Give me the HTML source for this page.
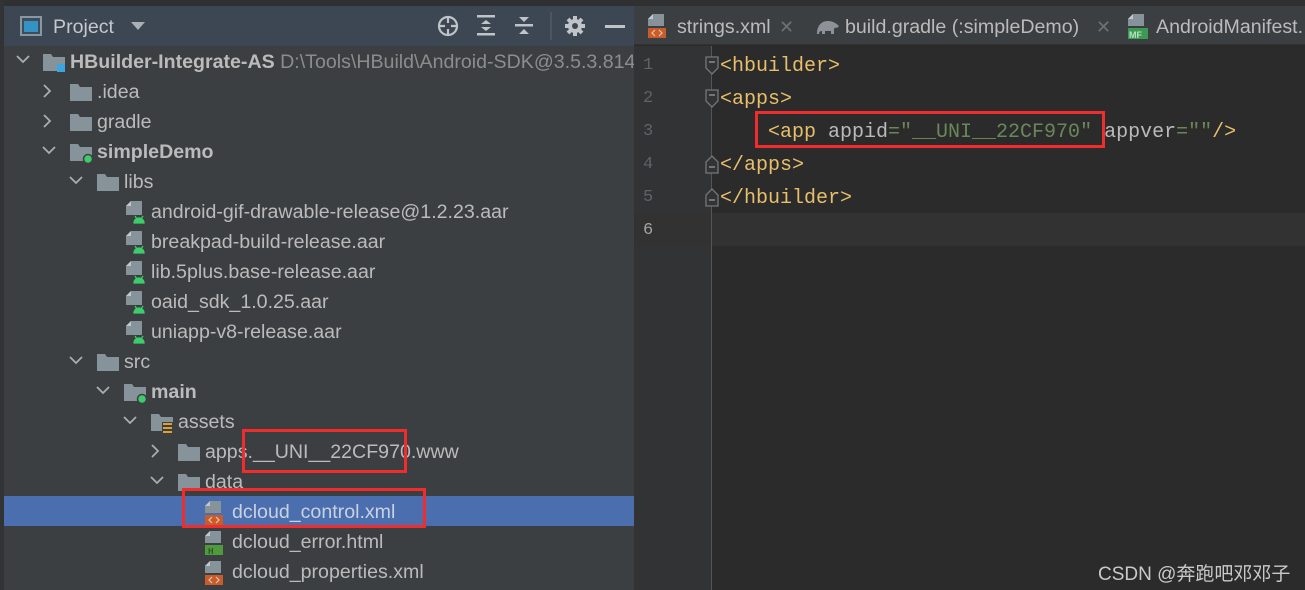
<!DOCTYPE html>
<html><head><meta charset="utf-8"><style>
*{margin:0;padding:0;box-sizing:border-box}
body{width:1305px;height:590px;overflow:hidden;background:#2b2b2b;position:relative;font-family:"Liberation Sans",sans-serif}
.a{position:absolute}
.t{position:absolute;color:#bbbbbb;font-size:19.6px;line-height:30px;white-space:nowrap;margin-top:1px}
.b{font-weight:bold}
.code{position:absolute;font-family:"Liberation Mono",monospace;font-size:20px;line-height:33px;white-space:pre;color:#e8bf6a}
.ln{position:absolute;font-family:"Liberation Mono",monospace;font-size:17px;color:#606366;left:643px}
.red{position:absolute;border:3px solid #f02c2c}
</style></head><body>
<div class="a" style="left:0;top:0;width:634px;height:590px;background:#3c3f41"></div>
<div class="a" style="left:0;top:0;width:634px;height:6px;background:#2e3032"></div>
<div class="a" style="left:0;top:0;width:4px;height:590px;background:#313335"></div>
<div class="a" style="left:4px;top:6px;width:630px;height:40px;background:#3d4653"></div>
<svg class="a" style="left:20px;top:16px" width="24" height="22"><rect x="1" y="1" width="20" height="18" fill="#3c4e5e" stroke="#8a96a0" stroke-width="2"/><rect x="4" y="5" width="14" height="11" fill="#3592c4"/></svg>
<div class="t" style="left:53px;top:11px;color:#c5c8cc">Project</div>
<svg class="a" style="left:131px;top:22px" width="14" height="9"><path d="M0 0H14L7 8Z" fill="#aab0b5"/></svg>
<svg class="a" style="left:436px;top:14px" width="24" height="24" fill="none" stroke="#c0c4c8" stroke-width="2.2"><circle cx="12" cy="12" r="9"/><path d="M12 3v6M12 15v6M3 12h6M15 12h6"/></svg>
<svg class="a" style="left:476px;top:15px" width="22" height="22" fill="#c0c4c8"><rect x="1" y="0" width="18" height="2.5"/><rect x="1" y="18" width="18" height="2.5"/><path d="M5 9l5-4 5 4zM5 12l5 4 5-4z"/></svg>
<svg class="a" style="left:514px;top:15px" width="22" height="22" fill="#c0c4c8"><rect x="1" y="9" width="18" height="2.5"/><path d="M5 2l5 5 5-5zM5 19l5-5 5 5z"/></svg>
<div class="a" style="left:550px;top:12px;width:2px;height:28px;background:#4c5560"></div>
<svg class="a" style="left:564px;top:15px" width="22" height="22"><circle cx="11" cy="11" r="7" fill="#c0c4c8"/><g stroke="#c0c4c8" stroke-width="4"><path d="M11 1v20M1 11h20M4 4l14 14M18 4L4 18"/></g><circle cx="11" cy="11" r="3" fill="#3d4653"/></svg>
<div class="a" style="left:605px;top:25px;width:20px;height:3px;background:#c0c4c8"></div>

<div class="a" style="left:4px;top:496px;width:630px;height:30px;background:#4b6eaf"></div>

<svg width="0" height="0" style="position:absolute"><defs>
<g id="dn"><path d="M1 2l6 6 6-6" fill="none" stroke="#a9aeb2" stroke-width="1.8"/></g>
<g id="rt"><path d="M2 1l6 6-6 6" fill="none" stroke="#a9aeb2" stroke-width="1.8"/></g>
<g id="fd"><path d="M0 2h8l2 3h12v14H0z" fill="#87939a"/></g>
<g id="md"><path d="M0 2h8l2 3h12v14H0z" fill="#87939a"/><circle cx="18" cy="17" r="4.5" fill="#3dcc6b" stroke="#3c3f41" stroke-width="1.5"/></g>
<g id="fl"><path d="M5 0h11v14H0V5z" fill="#87939a"/><path d="M0 5h5V0z" fill="#c2c7cb"/></g>
</defs></svg>

<svg class="a" style="left:16px;top:54px" width="14" height="14"><use href="#dn"/></svg>
<svg class="a" style="left:43px;top:52px" width="24" height="22"><path d="M0 2h8l2 3h12v14H0z" fill="#87939a"/><rect x="14" y="12" width="8" height="8" fill="#3aa5e0"/></svg>
<div class="t b" style="left:70px;top:46px">HBuilder-Integrate-AS <span style="font-weight:normal;color:#8c8c8c">D:\Tools\HBuild\Android-SDK@3.5.3.814</span></div>

<svg class="a" style="left:42px;top:84px" width="14" height="14"><use href="#rt"/></svg>
<svg class="a" style="left:70px;top:82px" width="24" height="20"><use href="#fd"/></svg>
<div class="t" style="left:97px;top:76px">.idea</div>
<svg class="a" style="left:42px;top:114px" width="14" height="14"><use href="#rt"/></svg>
<svg class="a" style="left:70px;top:112px" width="24" height="20"><use href="#fd"/></svg>
<div class="t" style="left:97px;top:106px">gradle</div>
<svg class="a" style="left:42px;top:145px" width="14" height="14"><use href="#dn"/></svg>
<svg class="a" style="left:70px;top:142px" width="24" height="24"><use href="#md"/></svg>
<div class="t b" style="left:97px;top:136px">simpleDemo</div>
<svg class="a" style="left:69px;top:175px" width="14" height="14"><use href="#dn"/></svg>
<svg class="a" style="left:97px;top:172px" width="24" height="20"><use href="#fd"/></svg>
<div class="t" style="left:124px;top:166px">libs</div>

<svg class="a" style="left:126px;top:201px" width="22" height="24"><use href="#fl"/><path d="M8 22a5 5 0 0 1 10 0z M9 15l2 3 M17 15l-2 3" fill="#3dcc6b" stroke="#3dcc6b" stroke-width="1.3"/></svg>
<div class="t" style="left:151px;top:196px">android-gif-drawable-release@1.2.23.aar</div>
<svg class="a" style="left:126px;top:231px" width="22" height="24"><use href="#fl"/><path d="M8 22a5 5 0 0 1 10 0z M9 15l2 3 M17 15l-2 3" fill="#3dcc6b" stroke="#3dcc6b" stroke-width="1.3"/></svg>
<div class="t" style="left:151px;top:226px">breakpad-build-release.aar</div>
<svg class="a" style="left:126px;top:261px" width="22" height="24"><use href="#fl"/><path d="M8 22a5 5 0 0 1 10 0z M9 15l2 3 M17 15l-2 3" fill="#3dcc6b" stroke="#3dcc6b" stroke-width="1.3"/></svg>
<div class="t" style="left:151px;top:256px">lib.5plus.base-release.aar</div>
<svg class="a" style="left:126px;top:291px" width="22" height="24"><use href="#fl"/><path d="M8 22a5 5 0 0 1 10 0z M9 15l2 3 M17 15l-2 3" fill="#3dcc6b" stroke="#3dcc6b" stroke-width="1.3"/></svg>
<div class="t" style="left:151px;top:286px">oaid_sdk_1.0.25.aar</div>
<svg class="a" style="left:126px;top:321px" width="22" height="24"><use href="#fl"/><path d="M8 22a5 5 0 0 1 10 0z M9 15l2 3 M17 15l-2 3" fill="#3dcc6b" stroke="#3dcc6b" stroke-width="1.3"/></svg>
<div class="t" style="left:151px;top:316px">uniapp-v8-release.aar</div>

<svg class="a" style="left:69px;top:355px" width="14" height="14"><use href="#dn"/></svg>
<svg class="a" style="left:97px;top:352px" width="24" height="20"><use href="#fd"/></svg>
<div class="t" style="left:124px;top:346px">src</div>
<svg class="a" style="left:96px;top:385px" width="14" height="14"><use href="#dn"/></svg>
<svg class="a" style="left:124px;top:382px" width="24" height="24"><use href="#md"/></svg>
<div class="t b" style="left:151px;top:376px">main</div>
<svg class="a" style="left:123px;top:415px" width="14" height="14"><use href="#dn"/></svg>
<svg class="a" style="left:151px;top:412px" width="24" height="22"><path d="M0 2h8l2 3h12v14H0z" fill="#87939a"/><rect x="11" y="10" width="11" height="12" fill="#3c3f41"/><g fill="#e0a030"><rect x="12" y="11" width="9" height="2"/><rect x="12" y="15" width="9" height="2"/><rect x="12" y="19" width="9" height="2"/></g></svg>
<div class="t" style="left:178px;top:406px">assets</div>
<svg class="a" style="left:150px;top:444px" width="14" height="14"><use href="#rt"/></svg>
<svg class="a" style="left:178px;top:442px" width="24" height="20"><use href="#fd"/></svg>
<div class="t" style="left:205px;top:436px">apps.__UNI__22CF970.www</div>
<svg class="a" style="left:150px;top:475px" width="14" height="14"><use href="#dn"/></svg>
<svg class="a" style="left:178px;top:472px" width="24" height="20"><use href="#fd"/></svg>
<div class="t" style="left:205px;top:466px">data</div>

<svg class="a" style="left:205px;top:501px" width="22" height="24"><path d="M5 0h11v12H0V5z" fill="#87939a"/><path d="M0 5h5V0z" fill="#c2c7cb"/><rect x="0" y="14" width="18" height="10" fill="#c75d2c"/><path d="M7 16l-3 3 3 3M11 16l3 3-3 3" fill="none" stroke="#f3c2a8" stroke-width="1.2"/></svg>
<div class="t" style="left:232px;top:496px;color:#c8d2e0">dcloud_control.xml</div>
<svg class="a" style="left:205px;top:531px" width="22" height="24"><path d="M5 0h11v12H0V5z" fill="#87939a"/><path d="M0 5h5V0z" fill="#c2c7cb"/><rect x="0" y="14" width="18" height="10" fill="#4e9a3c"/><text x="3" y="23" font-size="9" font-family="Liberation Mono" fill="#1e3a15">H</text></svg>
<div class="t" style="left:232px;top:526px">dcloud_error.html</div>
<svg class="a" style="left:205px;top:561px" width="22" height="24"><path d="M5 0h11v12H0V5z" fill="#87939a"/><path d="M0 5h5V0z" fill="#c2c7cb"/><rect x="0" y="14" width="18" height="10" fill="#c75d2c"/><path d="M7 16l-3 3 3 3M11 16l3 3-3 3" fill="none" stroke="#f3c2a8" stroke-width="1.2"/></svg>
<div class="t" style="left:232px;top:556px">dcloud_properties.xml</div>

<div class="a" style="left:634px;top:0;width:671px;height:6px;background:#2e3032"></div>
<div class="a" style="left:634px;top:6px;width:671px;height:39px;background:#3c3f41;border-bottom:1px solid #323232"></div>
<svg class="a" style="left:648px;top:14px" width="22" height="24"><path d="M5 0h11v12H0V5z" fill="#87939a"/><path d="M0 5h5V0z" fill="#c2c7cb"/><rect x="0" y="14" width="18" height="10" fill="#c75d2c"/><path d="M7 16l-3 3 3 3M11 16l3 3-3 3" fill="none" stroke="#f3c2a8" stroke-width="1.2"/></svg>
<div class="t" style="left:677px;top:11px">strings.xml</div>
<div class="t" style="left:779px;top:11px;color:#6d7174;font-size:18px">✕</div>
<svg class="a" style="left:815px;top:16px" width="26" height="20"><path d="M2 18c0-8 4-13 11-13 5 0 9 3 11 5l-2 2c-2-1-3 0-3 2v4h-3v-3h-6v3H7v-3c-2 0-3 1-3 3z" fill="#8c9297"/></svg>
<div class="t" style="left:845px;top:11px">build.gradle (:simpleDemo)</div>
<div class="t" style="left:1096px;top:11px;color:#6d7174;font-size:18px">✕</div>
<svg class="a" style="left:1128px;top:14px" width="22" height="26"><path d="M5 0h11v12H0V5z" fill="#87939a"/><path d="M0 5h5V0z" fill="#c2c7cb"/><rect x="0" y="14" width="20" height="11" fill="#3d9a55"/><text x="1" y="24" font-size="9" font-family="Liberation Sans" font-weight="bold" fill="#b7e3c2">MF</text></svg>
<div class="t" style="left:1156px;top:11px">AndroidManifest.</div>

<div class="a" style="left:634px;top:46px;width:78px;height:544px;background:#313335"></div>
<div class="a" style="left:634px;top:213px;width:671px;height:33px;background:#323232"></div>
<div class="a" style="left:711px;top:46px;width:1px;height:544px;background:#555555"></div>
<div class="ln" style="top:56px">1</div>
<div class="ln" style="top:89px">2</div>
<div class="ln" style="top:122px">3</div>
<div class="ln" style="top:155px">4</div>
<div class="ln" style="top:188px">5</div>
<div class="ln" style="top:221px;color:#a4a3a3">6</div>
<svg class="a" style="left:705px;top:56px" width="14" height="22"><path d="M1 1h12v11l-6 6-6-6z" fill="#313335" stroke="#777" stroke-width="1.3"/><path d="M4 6h6" stroke="#999" stroke-width="1.3"/></svg>
<svg class="a" style="left:705px;top:89px" width="14" height="22"><path d="M1 1h12v11l-6 6-6-6z" fill="#313335" stroke="#777" stroke-width="1.3"/><path d="M4 6h6" stroke="#999" stroke-width="1.3"/></svg>
<svg class="a" style="left:705px;top:153px" width="14" height="22"><path d="M1 20h12V9L7 3 1 9z" fill="#313335" stroke="#777" stroke-width="1.3"/><path d="M4 14h6" stroke="#999" stroke-width="1.3"/></svg>
<svg class="a" style="left:705px;top:186px" width="14" height="22"><path d="M1 20h12V9L7 3 1 9z" fill="#313335" stroke="#777" stroke-width="1.3"/><path d="M4 14h6" stroke="#999" stroke-width="1.3"/></svg>

<div class="code" style="left:720px;top:50px">&lt;hbuilder&gt;</div>
<div class="code" style="left:720px;top:83px">&lt;apps&gt;</div>
<div class="code" style="left:768px;top:116px">&lt;app <span style="color:#bababa">appid</span><span style="color:#6a8759">="__UNI__22CF970"</span> <span style="color:#bababa">appver</span><span style="color:#6a8759">=""</span>/&gt;</div>
<div class="code" style="left:720px;top:149px">&lt;/apps&gt;</div>
<div class="code" style="left:720px;top:182px">&lt;/hbuilder&gt;</div>

<div class="red" style="left:755px;top:111px;width:350px;height:37px"></div>
<div class="red" style="left:242px;top:429px;width:165px;height:44px"></div>
<div class="red" style="left:182px;top:488px;width:244px;height:40px"></div>

<div class="a" style="left:1098px;top:559px;font-size:19px;color:#c9c9c9;font-family:'Liberation Sans','Noto Sans CJK SC',sans-serif;white-space:nowrap">CSDN @奔跑吧邓邓子</div>
</body></html>
